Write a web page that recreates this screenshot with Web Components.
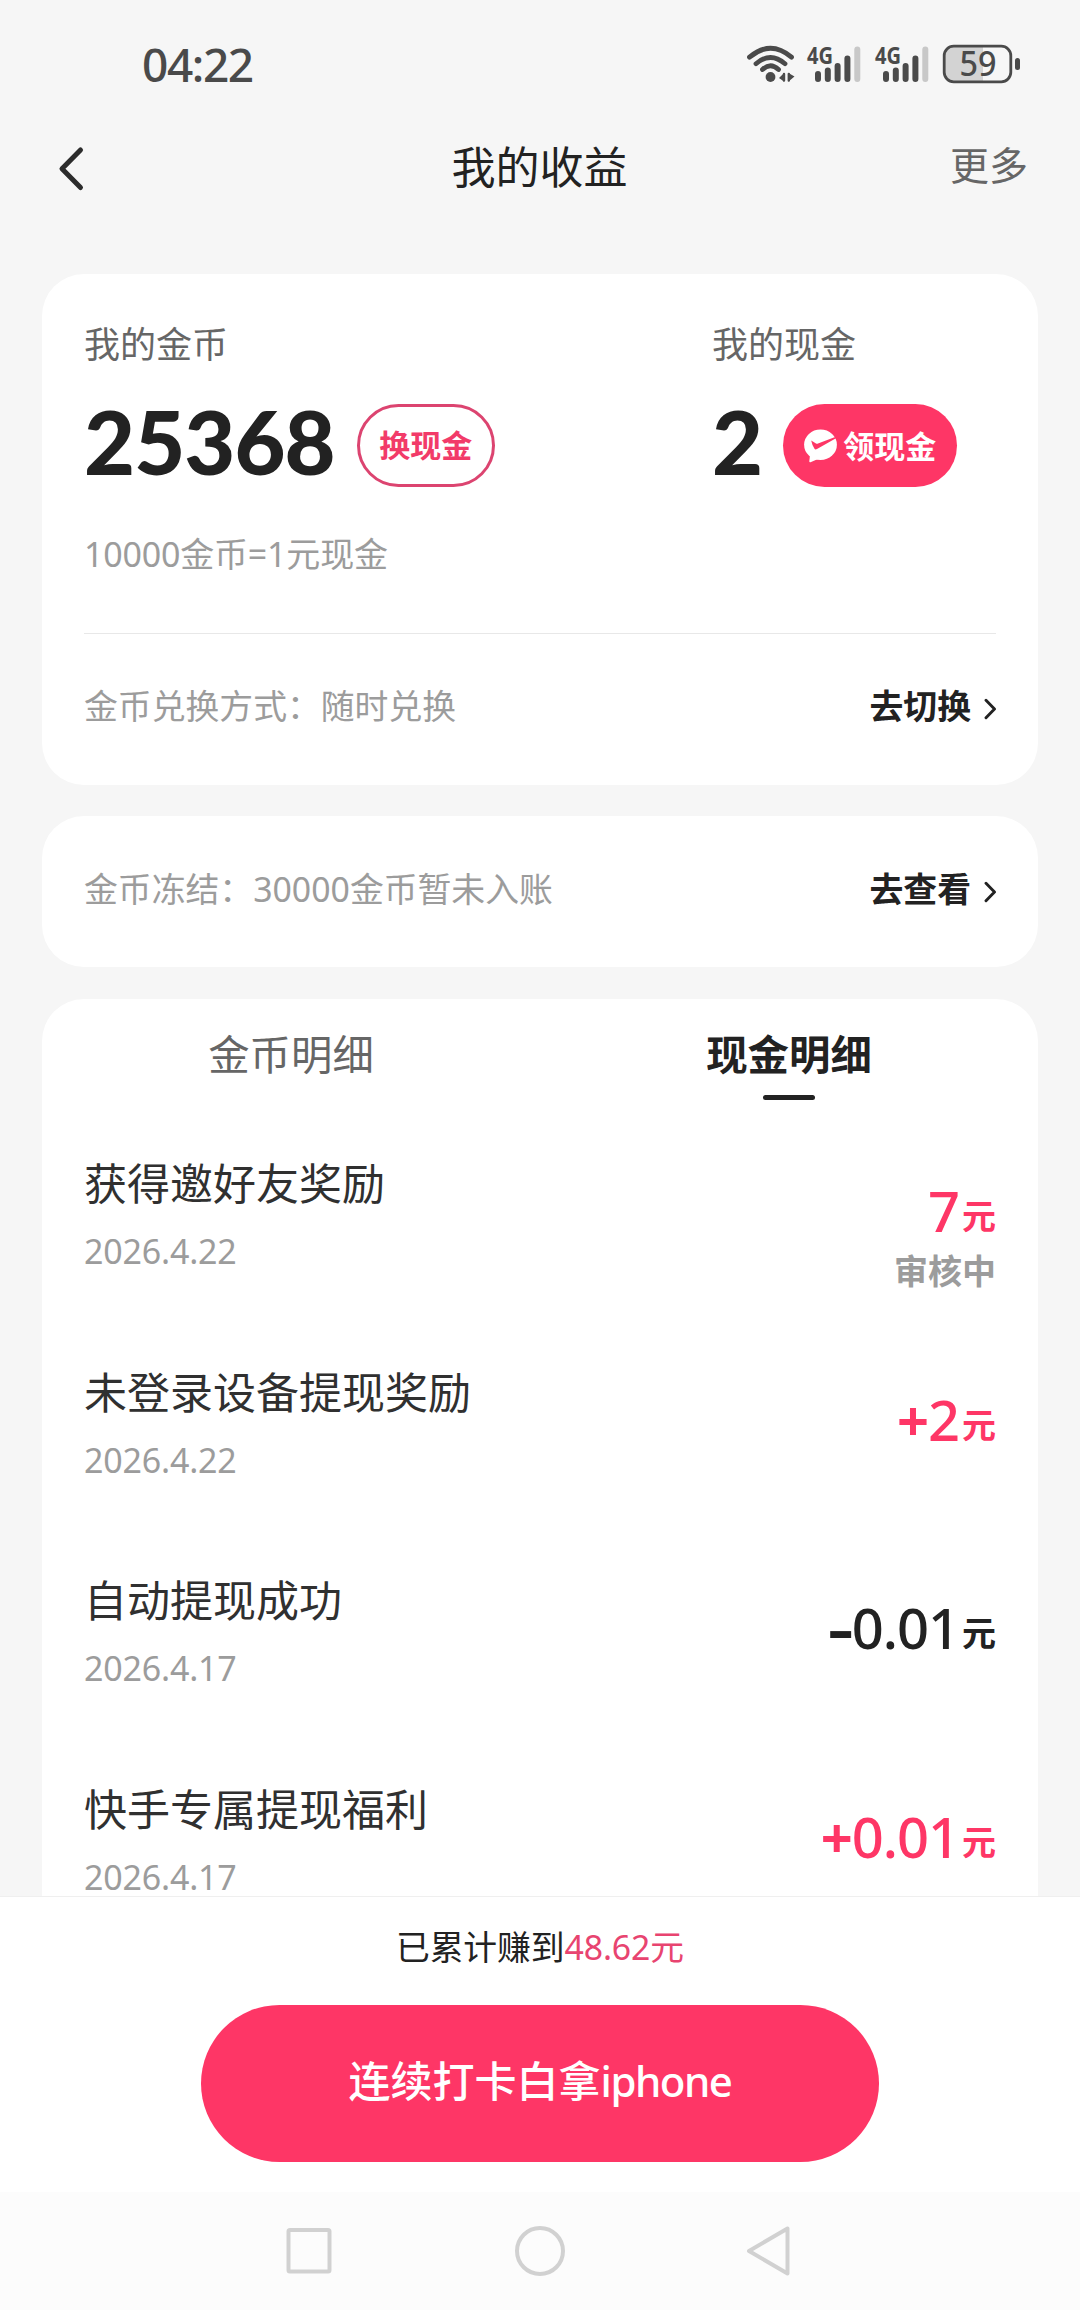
<!DOCTYPE html>
<html lang="zh-CN">
<head>
<meta charset="utf-8">
<title>我的收益</title>
<style>
  html, body { margin: 0; padding: 0; }
  body {
    width: 1080px; height: 2310px; overflow: hidden; background: #f6f6f6; color: #222;
    font-family: "Noto Sans", "Noto Sans CJK SC", sans-serif;
    --pink: #fe3666; --ink: #222; --mid: #666; --soft: #9c9c9c;
  }
</style>
</head>
<body>
<earnings-page></earnings-page>
<script>
const define = (name, html, after) => {
  const tpl = document.createElement('template');
  tpl.innerHTML = html;
  customElements.define(name, class extends HTMLElement {
    constructor() {
      super();
      this.attachShadow({ mode: 'open' }).appendChild(tpl.content.cloneNode(true));
    }
    connectedCallback() { if (after) after(this, this.shadowRoot); }
  });
};

define('signal-icon', `
<style>:host{display:block;width:56px;height:40px} svg{display:block;overflow:visible}</style>
<svg width="56" height="40" viewBox="0 0 56 40" stroke-linecap="round" stroke="#4a4a4a" stroke-width="6">
  <text x="0" y="20" font-family="Noto Sans" font-weight="700" font-size="23.5" stroke="none" fill="#4a4a4a" textLength="26" lengthAdjust="spacingAndGlyphs">4G</text>
  <path d="M11 30v5M20.800 26.500v8.500M30.600 22v13M40.400 14.500v20.500" fill="none"/>
  <path d="M50.300 5.500v29.500" stroke="#c8c8c8" fill="none"/>
</svg>`);

define('wifi-icon', `
<style>:host{display:block;width:50px;height:40px} svg{display:block}</style>
<svg width="50" height="40" viewBox="0 0 50 40" fill="none" stroke="#4a4a4a" stroke-width="4.800" stroke-linecap="round">
  <path d="M3.500 13.200Q24.500-4.600 45.500 13.200M10 19.700Q24.500 7.200 39 19.700M16.500 25.500Q24.500 18 32.500 25.500"/>
  <circle cx="24.500" cy="33" r="4.900" fill="#4a4a4a" stroke="none"/>
  <path d="M38 29v8.500l-5-3.500z M42.500 29l6 3.500l-6 5z" fill="#4a4a4a" stroke="none"/>
  <path d="M38 30v6.500M42.800 30v6.500" stroke-width="2.400"/>
</svg>`);

define('battery-icon', `
<style>:host{display:block;width:80px;height:40px} svg{display:block;overflow:visible}</style>
<svg width="80" height="40" viewBox="0 0 80 40">
  <path d="M11 3H41V37H11Q2 37 2 28V12Q2 3 11 3Z" fill="#d3d3d3"/>
  <rect x="2.200" y="2.200" width="66.600" height="35.600" rx="9.500" fill="none" stroke="#4a4a4a" stroke-width="2.800"/>
  <rect x="73" y="14" width="5" height="12" rx="2.500" fill="#4a4a4a"/>
  <text x="17.500" y="32" font-family="Noto Sans" font-weight="500" font-size="33.500" fill="#4a4a4a" textLength="37" lengthAdjust="spacingAndGlyphs">59</text>
</svg>`);

define('status-bar', `
<style>
  :host{display:flex;height:128px;box-sizing:border-box;padding:0 58px 0 142px;justify-content:space-between}
  .time{font-size:46px;font-weight:500;line-height:60px;margin-top:34px;letter-spacing:-1.400px;color:#4a4a4a}
  .icons{display:flex;margin-top:44px;height:40px}
  wifi-icon{margin-right:11px} signal-icon{margin-right:12px} .last{margin-right:11px}
</style>
<span class="time">04:22</span>
<div class="icons"><wifi-icon></wifi-icon><signal-icon></signal-icon><signal-icon class="last"></signal-icon><battery-icon></battery-icon></div>`);

define('nav-header', `
<style>
  :host{display:grid;grid-template-columns:1fr auto 1fr;align-items:center;height:80px;padding:0 52px 0 52px;margin-bottom:66px}
  svg{display:block;margin-left:4px}
  .title{font-size:44px;line-height:60px;padding-bottom:3px;margin-left:-1px}
  .more{justify-self:end;font-size:39px;line-height:60px;color:var(--mid);padding-bottom:6px}
</style>
<svg width="30" height="50" viewBox="0 0 30 50" fill="none" stroke="#2c2c2c" stroke-width="5" stroke-linecap="round" stroke-linejoin="round"><path d="M24.500 7L6 25.800L24.500 44.500"/></svg>
<span class="title"><slot></slot></span>
<span class="more"><slot name="more"></slot></span>`);

define('white-card', `
<style>:host{display:flex;flex-direction:column;box-sizing:border-box;margin:0 42px;padding:0 42px;background:#fff;border-radius:42px}</style>
<slot></slot>`);

define('pill-button', `
<style>
  :host{display:flex;align-items:center;justify-content:center;box-sizing:border-box;height:83px;width:138px;border-radius:42px;
    border:3px solid #dc4470;color:#f23b69;font-size:31px;font-weight:700;line-height:40px;flex:none}
  :host([solid]){width:174px;border:0;background:var(--pink);color:#fff}
  span{padding-bottom:2px} :host([solid]) span{padding:0}
  ::slotted(svg){display:block;margin-right:5px}
</style>
<slot name="icon"></slot><span><slot></slot></span>`);

define('balance-block', `
<style>
  :host{display:block}
  .label{font-size:36px;line-height:40px;color:var(--mid)}
  .row{display:flex;align-items:center;height:83px;margin-top:39px;gap:var(--gap,22px)}
  .num{font-family:Lato,"Noto Sans",sans-serif;font-weight:900;font-size:88px;line-height:80px;letter-spacing:-.9px;padding-bottom:9px;color:var(--ink)}
</style>
<div class="label"><slot name="label"></slot></div>
<div class="row"><span class="num"><slot></slot></span><slot name="action"></slot></div>`);

define('link-row', `
<style>
  :host{display:flex;justify-content:space-between;align-items:center;font-size:33.850px;line-height:40px;color:var(--soft)}
  .go{display:flex;align-items:center;color:var(--ink);font-weight:700}
  svg{display:block;margin:5px 0 0 13px}
</style>
<span><slot></slot></span>
<span class="go"><slot name="go"></slot><svg width="12" height="22" viewBox="0 0 12 22" fill="none" stroke="#222" stroke-width="2.900" stroke-linecap="round" stroke-linejoin="round"><path d="M2 2.300L10.500 11L2 19.700"/></svg></span>`);

define('tab-item', `
<style>
  :host{flex:1;display:flex;flex-direction:column;align-items:center;font-size:41.400px;line-height:50px;color:var(--mid)}
  :host([active]){color:var(--ink);font-weight:700}
  i{display:none;width:52px;height:5px;border-radius:3px;background:var(--ink);margin-top:16px}
  :host([active]) i{display:block}
</style>
<slot></slot><i></i>`);

define('record-row', `
<style>
  :host{display:flex;justify-content:space-between;height:208.670px;flex:none;margin:0 42px}
  .title{font-size:43px;line-height:60px;color:#303030}
  .date{font-size:34px;line-height:40px;color:var(--soft);margin-top:17px;letter-spacing:-.2px}
  .right{text-align:right}
  .amt{display:flex;justify-content:flex-end;align-items:baseline;line-height:60px;margin-top:26px;color:var(--pink)}
  :host([out]) .amt{color:var(--ink)}
  .n{font-size:56px;font-weight:500;letter-spacing:-1px}
  .sign{font-weight:700;display:inline-block}
  :host([out]) .sign{transform:scaleX(1.420);transform-origin:100% 50%}
  .u{font-size:34px;font-weight:700;margin-left:3px;line-height:40px;align-self:flex-start;margin-top:16px}
  .state{font-size:34px;font-weight:700;line-height:40px;color:var(--soft);margin-top:11px}
</style>
<div><div class="title"></div><div class="date"></div></div>
<div class="right"><div class="amt"><span class="n"><span class="sign"></span><span class="v"></span></span><span class="u">元</span></div><div class="state"></div></div>`,
(el, root) => {
  for (const k of ['title', 'date', 'sign', 'v', 'state'])
    root.querySelector('.' + k).textContent = el.dataset[k] || '';
});

define('record-card', `
<style>
  :host{display:block;height:897px;flex:none;margin:0 42px;background:#fff;border-radius:42px 42px 0 0}
  .tabs{display:flex;padding-top:30px;height:125px}
</style>
<div class="tabs"><tab-item>金币明细</tab-item><tab-item active>现金明细</tab-item></div>
<slot></slot>`);

define('bottom-bar', `
<style>
  :host{display:flex;flex-direction:column;align-items:center;box-sizing:border-box;height:296px;background:#fff;border-top:1px solid #efefef;flex:none}
  .sum{font-size:33.800px;line-height:40px;margin-top:30px;letter-spacing:-.1px;color:var(--ink)}
  b{font-weight:400;color:#e84470}
  button{all:unset;display:flex;align-items:center;justify-content:center;box-sizing:border-box;width:678px;height:157px;margin-top:38px;
    padding-bottom:5px;border-radius:79px;background:var(--pink);color:#fff;font-size:42px;font-weight:500;line-height:60px}
  button span{letter-spacing:-1.500px}
</style>
<div class="sum">已累计赚到<b>48.62元</b></div>
<button><div>连续打卡白拿<span>iphone</span></div></button>`);

define('system-nav', `
<style>:host{display:flex;justify-content:center;align-items:center;height:118px;background:#fcfcfc;gap:179px;flex:none} svg{display:block}</style>
<svg width="52" height="52" viewBox="0 0 52 52" fill="none" stroke="#d1d1d1" stroke-width="4"><rect x="5.500" y="5" width="41" height="41.500" rx="1.500"/></svg>
<svg width="52" height="52" viewBox="0 0 52 52" fill="none" stroke="#d1d1d1" stroke-width="4"><circle cx="26" cy="26" r="23"/></svg>
<svg width="52" height="52" viewBox="0 0 52 52" fill="none" stroke="#d1d1d1" stroke-width="4" stroke-linejoin="round"><path d="M42.500 3.500V48.500L4 26Z"/></svg>`);

define('earnings-page', `
<style>
  :host{display:flex;flex-direction:column;height:2310px}
  .summary{height:511px;padding-top:51px;margin-bottom:31px}
  .balances{display:flex}
  .coins{width:628px}
  .cash{--gap:21px}
  .rate{font-size:34px;line-height:40px;color:var(--soft);margin-top:47px;letter-spacing:-.2px}
  hr{all:unset;display:block;height:1px;background:#e8e8e8;margin-top:59px}
  .summary link-row{height:144px}
  .frozen{height:151px;margin-bottom:32px}
  .frozen link-row{height:146px}
</style>
<status-bar></status-bar>
<nav-header>我的收益<span slot="more">更多</span></nav-header>
<white-card class="summary">
  <div class="balances">
    <balance-block class="coins"><span slot="label">我的金币</span>25368<pill-button slot="action">换现金</pill-button></balance-block>
    <balance-block class="cash"><span slot="label">我的现金</span>2<pill-button slot="action" solid>
      <svg slot="icon" width="34" height="34" viewBox="0 0 34 34"><ellipse cx="16.500" cy="15.800" rx="16.400" ry="15.300" fill="#fff"/><path d="M6 26L5.300 32.200Q5.200 33.500 6.500 33.200L14 30Z" fill="#fff"/><path d="M7.200 11.600L12 14.500Q13 15 14 14.600L30.500 8.200L32.400 9L13 20Q11.300 21 10.500 19.800Q8 16 7.200 11.600Z" fill="#fe3666"/></svg>领现金</pill-button></balance-block>
  </div>
  <div class="rate">10000金币=1元现金</div>
  <hr>
  <link-row>金币兑换方式：随时兑换<span slot="go">去切换</span></link-row>
</white-card>
<white-card class="frozen"><link-row>金币冻结：30000金币暂未入账<span slot="go">去查看</span></link-row></white-card>
<record-card>
  <record-row data-title="获得邀好友奖励" data-date="2026.4.22" data-v="7" data-state="审核中"></record-row>
  <record-row data-title="未登录设备提现奖励" data-date="2026.4.22" data-sign="+" data-v="2"></record-row>
  <record-row out data-title="自动提现成功" data-date="2026.4.17" data-sign="-" data-v="0.01"></record-row>
  <record-row data-title="快手专属提现福利" data-date="2026.4.17" data-sign="+" data-v="0.01"></record-row>
</record-card>
<bottom-bar></bottom-bar>
<system-nav></system-nav>`);
</script>
</body>
</html>
